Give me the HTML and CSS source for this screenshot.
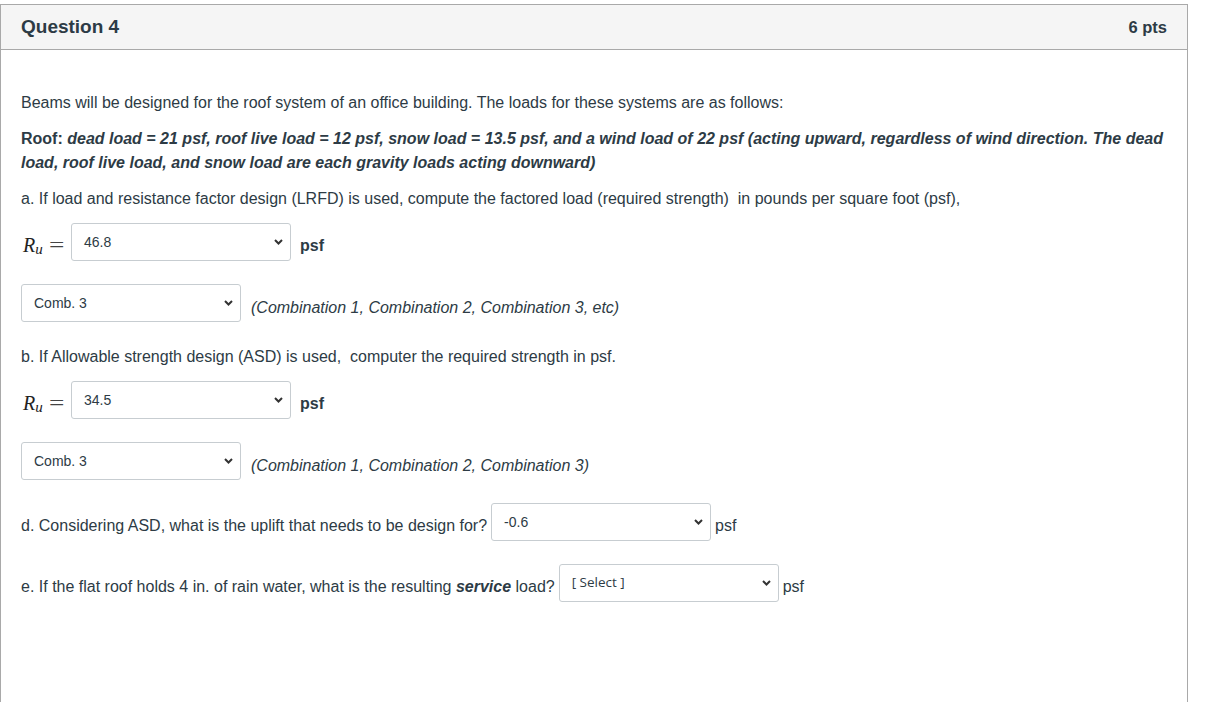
FILE: index.html
```html
<!DOCTYPE html>
<html>
<head>
<meta charset="utf-8">
<link rel="stylesheet" href="styles.css">
</head>
<body>
<div class="card">
  <div class="card-header">
    <span class="title">Question 4</span>
    <span class="pts">6 pts</span>
  </div>
  <div class="content">
    <p class="p-first">Beams will be designed for the roof system of an office building. The loads for these systems are as follows:</p>
    <p class="p-roof"><strong>Roof: <em>dead load = 21 psf, roof live load = 12 psf, snow load = 13.5 psf, and a wind load of 22 psf (acting upward, regardless of wind direction. The dead load, roof live load, and snow load are each gravity loads acting downward)</em></strong></p>
    <p class="p-q">a. If load and resistance factor design (LRFD) is used, compute the factored load (required strength)&nbsp; in pounds per square foot (psf),</p>

    <div class="row row-tight">
      <span class="math"><span class="mi">R</span><span class="sub">u</span><span class="eq">=</span></span>
      <div class="select"><span class="sel-text">46.8</span><svg class="chev" width="9" height="6" viewBox="0 0 9 6"><path d="M1 1 L4.5 4.5 L8 1" fill="none" stroke="#333" stroke-width="2"/></svg></div>
      <span class="unit bold">psf</span>
    </div>

    <div class="row">
      <div class="select"><span class="sel-text">Comb. 3</span><svg class="chev" width="9" height="6" viewBox="0 0 9 6"><path d="M1 1 L4.5 4.5 L8 1" fill="none" stroke="#333" stroke-width="2"/></svg></div>
      <span class="note"><em>(Combination 1, Combination 2, Combination 3, etc)</em></span>
    </div>

    <p class="p-b">b. If Allowable strength design (ASD) is used,&nbsp; computer the required strength in psf.</p>

    <div class="row row-tight">
      <span class="math"><span class="mi">R</span><span class="sub">u</span><span class="eq">=</span></span>
      <div class="select"><span class="sel-text">34.5</span><svg class="chev" width="9" height="6" viewBox="0 0 9 6"><path d="M1 1 L4.5 4.5 L8 1" fill="none" stroke="#333" stroke-width="2"/></svg></div>
      <span class="unit bold">psf</span>
    </div>

    <div class="row">
      <div class="select"><span class="sel-text">Comb. 3</span><svg class="chev" width="9" height="6" viewBox="0 0 9 6"><path d="M1 1 L4.5 4.5 L8 1" fill="none" stroke="#333" stroke-width="2"/></svg></div>
      <span class="note"><em>(Combination 1, Combination 2, Combination 3)</em></span>
    </div>

    <div class="row">
      <span class="label">d. Considering ASD, what is the uplift that needs to be design for?</span>
      <div class="select select-inline"><span class="sel-text">-0.6</span><svg class="chev" width="9" height="6" viewBox="0 0 9 6"><path d="M1 1 L4.5 4.5 L8 1" fill="none" stroke="#333" stroke-width="2"/></svg></div>
      <span class="label unit-plain">psf</span>
    </div>

    <div class="row">
      <span class="label">e. If the flat roof holds 4 in. of rain water, what is the resulting <strong><em>service</em></strong> load?</span>
      <div class="select select-inline"><span class="sel-text placeholder">[ Select ]</span><svg class="chev" width="9" height="6" viewBox="0 0 9 6"><path d="M1 1 L4.5 4.5 L8 1" fill="none" stroke="#333" stroke-width="2"/></svg></div>
      <span class="label unit-plain">psf</span>
    </div>
  </div>
</div>
</body>
</html>
```

FILE: styles.css
```css
html, body {
  margin: 0;
  padding: 0;
  background: #ffffff;
  overflow: hidden;
}

body {
  font-family: "Liberation Sans", Arial, sans-serif;
  color: #2d3b45;
  font-size: 16px;
  line-height: 24px;
}

.card {
  margin-top: 4px;
  width: 1186px;
  height: 700px;
  border: 1px solid #a9a9a9;
  box-sizing: content-box;
}

.card-header {
  height: 44px;
  background: #f5f5f5;
  border-bottom: 1px solid #a9a9a9;
  display: flex;
  align-items: center;
  justify-content: space-between;
  padding: 0 20px;
}

.title {
  font-weight: bold;
  font-size: 19px;
  color: #2d3b45;
  padding-bottom: 1px;
}

.pts {
  font-weight: bold;
  font-size: 16.5px;
  color: #2d3b45;
  padding-bottom: 1px;
}

.content {
  padding: 41px 20px 0 20px;
}

.content p {
  margin: 0;
}

.p-roof { margin-top: 12px !important; }
.p-q { margin-top: 12px !important; }
.p-b { margin-top: 23px !important; }

.row {
  display: flex;
  align-items: center;
  margin-top: 23px;
  height: 38px;
}

.row-tight {
  margin-top: 12px;
}

.math {
  font-family: "DejaVu Serif", "Liberation Serif", serif;
  color: #222;
  display: flex;
  align-items: baseline;
  padding-top: 8px;
  margin-left: 2px;
  width: 48px;
}

.mi {
  font-family: "Liberation Serif", serif;
  font-style: italic;
  font-size: 20px;
}

.sub {
  font-family: "Liberation Serif", serif;
  font-style: italic;
  font-size: 15px;
  position: relative;
  top: 2px;
  margin-left: 0;
}

.eq {
  font-family: "Liberation Serif", serif;
  font-size: 21px;
  margin-left: 6px;
  display: inline-block;
  transform: scaleX(1.3);
  transform-origin: left center;
  color: #444;
}

.select {
  position: relative;
  width: 220px;
  height: 38px;
  box-sizing: border-box;
  border: 1px solid #c7cdd1;
  border-radius: 3px;
  background: #fff;
  display: flex;
  align-items: center;
  padding: 0 12px;
  font-size: 14px;
  color: #2d3b45;
  flex-shrink: 0;
}

.sel-text {
  line-height: 16px;
  padding-bottom: 1px;
}

.placeholder {
  font-family: "Open Sans", "Liberation Sans", sans-serif;
  font-size: 13.5px;
  padding-bottom: 3px;
}

.chev {
  position: absolute;
  right: 7px;
  top: 15px;
}

.unit {
  margin-left: 9px;
  padding-top: 7px;
}

.bold {
  font-weight: bold;
}

.note {
  margin-left: 10px;
  padding-top: 9px;
}

.label {
  padding-top: 7px;
  white-space: nowrap;
}

.select-inline {
  margin-left: 4px;
}

.unit-plain {
  margin-left: 4px;
}
```
